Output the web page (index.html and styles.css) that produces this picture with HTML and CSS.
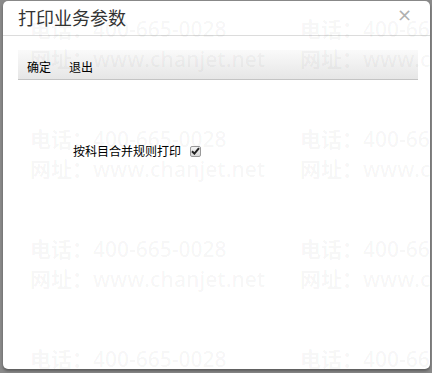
FILE: index.html
```html
<!DOCTYPE html>
<html lang="zh">
<head>
<meta charset="utf-8">
<link rel="stylesheet" href="styles.css">
</head>
<body>
<div class="dialog">
  <div class="header">
    <span class="title">打印业务参数</span>
    <span class="close">×</span>
  </div>
  <div class="toolbar">
    <span class="btn">确定</span>
    <span class="btn">退出</span>
  </div>
  <div class="form">
    <label class="field">
      <span class="label">按科目合并规则打印</span>
      <span class="check"><svg width="9" height="8" viewBox="0 0 9 8"><path d="M1 4.2 L3.4 6.6 L8 1.2" fill="none" stroke="#222" stroke-width="2"/></svg></span>
    </label>
  </div>
  <div class="watermark">
    <div class="tile"><div>电话：400-665-0028</div><div>网址：www.chanjet.net</div></div>
    <div class="tile"><div>电话：400-665-0028</div><div>网址：www.chanjet.net</div></div>
    <div class="tile"><div>电话：400-665-0028</div><div>网址：www.chanjet.net</div></div>
    <div class="tile"><div>电话：400-665-0028</div><div>网址：www.chanjet.net</div></div>
    <div class="tile"><div>电话：400-665-0028</div><div>网址：www.chanjet.net</div></div>
    <div class="tile"><div>电话：400-665-0028</div><div>网址：www.chanjet.net</div></div>
    <div class="tile"><div>电话：400-665-0028</div><div>网址：www.chanjet.net</div></div>
    <div class="tile"><div>电话：400-665-0028</div><div>网址：www.chanjet.net</div></div>
  </div>
</div>
</body>
</html>
```
FILE: styles.css
```css
html, body {
  margin: 0;
  padding: 0;
  height: 373px;
  overflow: hidden;
}
body {
  background: #8a8a8a;
  font-family: "Noto Sans CJK SC", "Liberation Sans", sans-serif;
}
.dialog {
  position: relative;
  margin: 1px 2px 0 3px;
  height: 368px;
  background: #fff;
  border-radius: 5px;
  box-shadow: 0 2px 3px rgba(0,0,0,0.35);
  overflow: hidden;
}
.header {
  position: relative;
  height: 34px;
  border-bottom: 1px solid #dcdcdc;
  display: flex;
  align-items: center;
  padding-left: 15px;
}
.title {
  font-size: 18px;
  color: #333;
  line-height: 20px;
  margin-top: -2px;
}
.close {
  position: absolute;
  right: 18px;
  top: 3px;
  font-family: "DejaVu Sans", sans-serif;
  font-size: 18px;
  color: #b0b0b0;
}
.toolbar {
  margin: 14px 12px 0 15px;
  height: 29px;
  border-bottom: 1px solid #c4c4c4;
  background: linear-gradient(#fafafa, #e6e6e6);
  display: flex;
  align-items: flex-end;
  padding-left: 9px;
  gap: 18px;
}
.btn {
  font-size: 12px;
  color: #000;
  line-height: 14px;
  padding-bottom: 5px;
}
.form {
  padding: 64px 0 0 70px;
}
.field {
  display: flex;
  align-items: center;
}
.label {
  font-size: 12px;
  color: #000;
  line-height: 14px;
}
.check {
  margin-left: 9px;
  width: 9px;
  height: 9px;
  border: 1px solid #9a9a9a;
  border-radius: 2px;
  background: linear-gradient(#f4f4f4, #d8d8d8);
  display: flex;
  align-items: center;
  justify-content: center;
}
.watermark {
  position: absolute;
  left: 27px;
  top: 13px;
  width: 600px;
  display: flex;
  flex-wrap: wrap;
  pointer-events: none;
  color: rgba(0,0,0,0.045);
  font-size: 21px;
  font-weight: 600;
  line-height: 30px;
  font-family: "Open Sans", "Noto Sans CJK SC", sans-serif;
}
.tile {
  width: 270px;
  height: 110px;
  white-space: nowrap;
}
```
